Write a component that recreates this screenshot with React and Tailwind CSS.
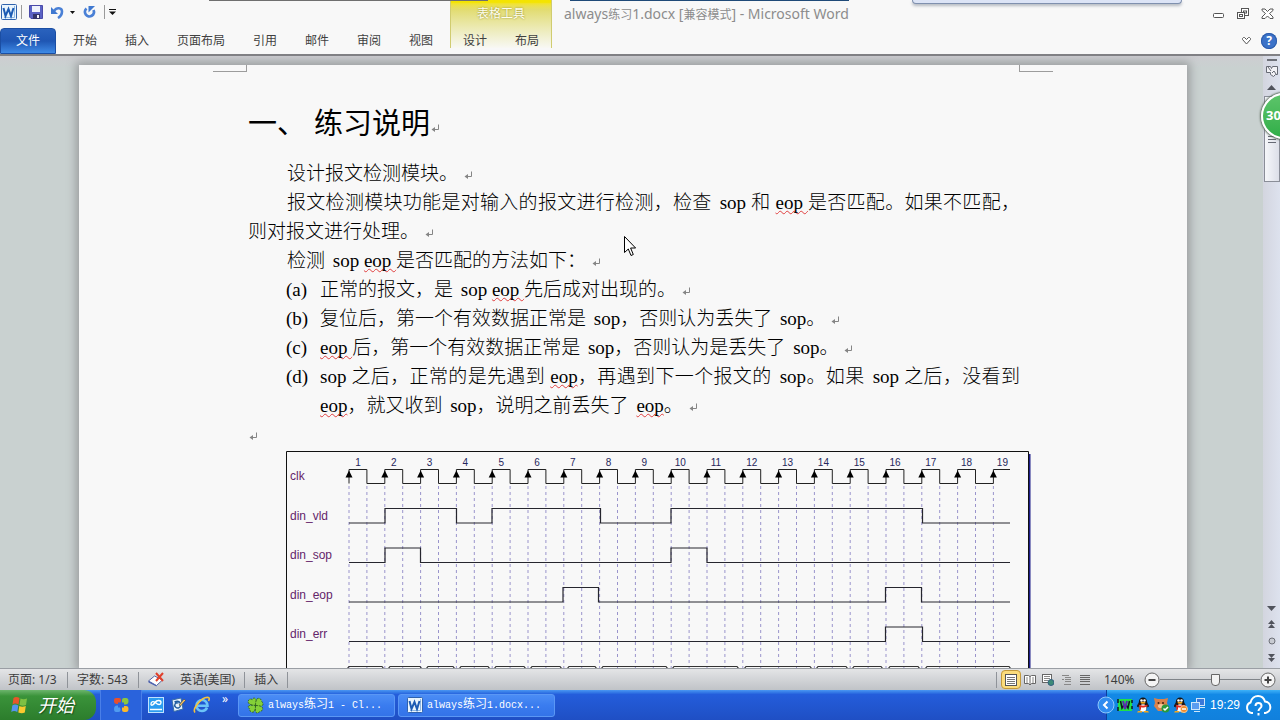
import React from "react";

const UI = "font-['Noto_Sans','Noto_Sans_CJK_SC',sans-serif]";

/* ---------- small drawings ---------- */

function WordIcon() {
  return (
    <svg width="16" height="16" viewBox="0 0 16 16" aria-hidden="true">
      <rect x="0.5" y="0.5" width="15" height="15" rx="1" fill="#eaf5fd" stroke="#2f62ad" />
      <path d="M13.500 2v11.500H3" fill="none" stroke="#8fb8e4" />
      <path d="M2.500 4l2 8L7.500 5l2.500 7L12.500 4" fill="none" stroke="#1d5cb4" strokeWidth="2" />
    </svg>
  );
}

function SaveIcon() {
  return (
    <svg width="14" height="14" viewBox="0 0 14 14" aria-hidden="true">
      <path d="M0.500 0.500h13v13h-11.500l-1.500-1.500z" fill="#5a62c4" stroke="#4a4aa8" />
      <rect x="3" y="1" width="8" height="6" fill="#eef2fb" />
      <rect x="4" y="9" width="7" height="5" fill="#33356b" />
      <rect x="8" y="10" width="2" height="3" fill="#f2f2f8" />
    </svg>
  );
}

function UndoIcon() {
  return (
    <svg width="13" height="13" viewBox="0 0 13 13" aria-hidden="true">
      <path d="M3 5C5.500 1 11 1.500 11 5.500c0 3-1.500 5-4 6.500" fill="none" stroke="#4a80d6" strokeWidth="2.600" />
      <path d="M0 1v7h7z" fill="#3f78d0" />
    </svg>
  );
}

function RedoIcon() {
  return (
    <svg width="13" height="13" viewBox="0 0 13 13" aria-hidden="true">
      <path d="M3.500 2.500A4.500 4.500 0 1 0 10.500 4" fill="none" stroke="#4a80d6" strokeWidth="2.800" />
      <path d="M5.500 0H12L5.500 6.500z" fill="#3f78d0" />
    </svg>
  );
}

function ReturnMark() {
  return (
    <svg className="ml-px inline-block" width="9" height="9" viewBox="0 0 9 9" aria-hidden="true">
      <path d="M7.500 0.500v5H2" fill="none" stroke="#858585" />
      <path d="M4 3v5L0.500 5.500z" fill="#858585" />
    </svg>
  );
}

function MousePointer() {
  return (
    <svg width="12" height="21" viewBox="0 0 12 21" aria-hidden="true">
      <path d="M0.500 0.500v16l3.800-3.500 2.700 6.500 2.300-1-2.700-6.500h5z" fill="#fff" stroke="#000" />
    </svg>
  );
}

/* ---------- title bar and ribbon ---------- */

const TABS = ["开始", "插入", "页面布局", "引用", "邮件", "审阅", "视图"];

function Header() {
  return (
    <header className="relative flex h-14 shrink-0 border-b-2 border-[#808084] bg-[#f8f8f8] text-xs text-[#404040]">
      <div className="flex w-[450px] shrink-0 flex-col">
        <div className="flex h-7 items-center pb-1 pl-px">
          <WordIcon />
          <span className="ml-1 h-3.5 w-px bg-[#9a9a9a]" />
          <button aria-label="保存" className="ml-[7px]"><SaveIcon /></button>
          <button aria-label="撤消" className="ml-2"><UndoIcon /></button>
          <button aria-label="撤消列表" className="ml-1.5">
            <svg width="5" height="3" viewBox="0 0 5 3"><path d="M0 0h5L2.500 3z" fill="#111" /></svg>
          </button>
          <button aria-label="重复" className="ml-2"><RedoIcon /></button>
          <span className="ml-2 h-3.5 w-px bg-[#9a9a9a]" />
          <button aria-label="自定义快速访问工具栏" className="ml-1">
            <svg width="7" height="6" viewBox="0 0 7 6"><path d="M0 0.500h7" stroke="#111" /><path d="M0 2.500h7L3.500 6z" fill="#111" /></svg>
          </button>
        </div>
        <nav className="flex h-[26px] items-stretch">
          <button className="mr-[3px] w-14 rounded-t border border-[#1b4ea3] bg-linear-to-b from-[#2a62bd] via-[#1f56b3] to-[#3f8ae6] text-white">文件</button>
          {TABS.map((t) => (
            <button key={t} className="px-3.5">{t}</button>
          ))}
        </nav>
      </div>
      <div className="flex w-[102px] shrink-0 flex-col">
        <div className="flex h-12 flex-col border-x border-[#d0cc70] bg-linear-to-b from-[#f4e400] from-5% via-[#e2dc70] via-20% to-[#f8f8f4]">
          <div className="h-7 text-center leading-7 text-[#fffef0] [text-shadow:0_0_2px_#8a8420]">表格工具</div>
          <div className="flex h-[26px] shrink-0 justify-between px-3">
            <button className="whitespace-nowrap">设计</button>
            <button className="whitespace-nowrap">布局</button>
          </div>
        </div>
      </div>
      <div className="flex min-w-0 flex-1 flex-col">
        <div className="flex h-7 items-center justify-between pl-3 pr-1.5">
          <h1 className="truncate text-sm text-[#8c8c8c]">
            always<span className="text-xs">练习</span>1.docx [<span className="text-xs">兼容模式</span>] - Microsoft Word
          </h1>
          <div className="flex items-center gap-3">
            <button aria-label="最小化">
              <svg width="12" height="12" viewBox="0 0 12 12"><rect x="0.500" y="5.500" width="10" height="4" rx="1" fill="#fff" stroke="#555" /></svg>
            </button>
            <button aria-label="还原">
              <svg width="12" height="12" viewBox="0 0 12 12" fill="#fff" stroke="#555"><rect x="4.500" y="0.500" width="7" height="7" /><rect x="6.500" y="3" width="3" height="2" /><rect x="0.500" y="4.500" width="7" height="6" /><rect x="2.500" y="6.500" width="3" height="2" /></svg>
            </button>
            <button aria-label="关闭">
              <svg width="13" height="12" viewBox="0 0 13 12"><path d="M1 1h3l2.500 2.500L9 1h3v1.500L8.500 5.500 12 9v1.500H9L6.500 8 4 10.500H1V9l3.500-3.500L1 2.500z" fill="#fff" stroke="#555" /></svg>
            </button>
          </div>
        </div>
        <div className="flex h-[26px] items-center justify-end gap-2.5 pr-[3px]">
          <button aria-label="功能区最小化">
            <svg width="9" height="8" viewBox="0 0 9 8"><path d="M0.500 1.500l1-1h1l2 2 2-2h1l1 1v1L4.500 7 0.500 2.500z" fill="#fff" stroke="#555" /></svg>
          </button>
          <button aria-label="帮助" className="flex size-4 items-center justify-center rounded-full bg-[#3b72c8] font-bold text-white ring-1 ring-inset ring-[#2c5cab]">?</button>
        </div>
      </div>
      <span className="absolute left-[209px] top-0 h-px w-[279px] bg-[#6f6f6f]" />
      <span className="absolute left-[570px] top-0 h-px w-[279px] bg-[#1f4a78]" />
      <span className="absolute left-[912px] top-0 h-1 w-[270px] rounded-b-sm border-x border-b border-[#7f90ae] bg-[#dce4f6] shadow-[0_2px_3px_#b5bac2]" />
    </header>
  );
}

/* ---------- document ---------- */

function Misspelt({ children }) {
  return (
    <span className="underline decoration-[#e04040] decoration-wavy decoration-1 underline-offset-1 [text-decoration-skip-ink:none]">{children}</span>
  );
}

/* Latin word set inside Chinese text, with the extra space that precedes it */
function Latin({ children }) {
  return <span className="ml-[3px]">{children}</span>;
}

function Item({ mark, children }) {
  return (
    <li className="flex pl-[38px]">
      <span className="w-[34px] shrink-0">{mark}</span>
      <p className="flex-1 text-justify">{children}</p>
    </li>
  );
}

const T0 = 349;
const STEP = 35.8;
const clockX = Array.from({ length: 19 }, (_, i) => T0 + STEP * i);

function clockPath() {
  return clockX
    .map((x, i) => {
      const rise = `${i ? "L" : "M"}${x} 483.5V469.5`;
      return i < 18 ? `${rise}H${x + STEP / 2}V483.5` : `${rise}H1010`;
    })
    .join("");
}

const SIGNALS = [
  { name: "din_vld", y: 520, d: "M349 523H385V508.5H456.500V523H492V508.500H600.500V523H671V508.500H922.500V523H1010" },
  { name: "din_sop", y: 559, d: "M349 562.500H385V548H420.500V562.500H671V548H707V562.500H1010" },
  { name: "din_eop", y: 599, d: "M349 602H563V587.500H598.500V602H885.500V587.500H921.500V602H1010" },
  { name: "din_err", y: 638, d: "M349 641.500H885.500V627H922.500V641.500H1010" },
];

const BUS = [
  [349, 383], [390, 421], [428, 454], [461, 489], [496, 525], [532, 561], [569, 596],
  [603, 667], [674, 738], [746, 811], [818, 847], [854, 882], [890, 919], [927, 1010],
];

function TimingDiagram() {
  return (
    <svg className="ml-[38px] mt-0.5 block font-['Liberation_Sans',Arial,sans-serif]" width="745" height="240" viewBox="286 451 745 240" role="img" aria-label="时序图">
      <path d="M1029.500 454V691" stroke="#1c1c88" strokeWidth="2" />
      <path d="M286.500 691V451.500H1028.500V691" fill="#f8f8f8" stroke="#111" />
      <g stroke="#9a94cc" strokeWidth="1" strokeDasharray="3 3">
        {clockX.map((x, i) => (
          <g key={i}>
            <path d={`M${x} 486V671`} />
            {i < 18 && <path d={`M${x + STEP / 2} 486V671`} />}
          </g>
        ))}
      </g>
      <path d={clockPath()} fill="none" stroke="#222" />
      {clockX.map((x, i) => (
        <g key={i}>
          <path d={`M${x} 470.5l3.500 7h-7z`} fill="#000" />
          <text x={x + 9} y="466" fontSize="10" textAnchor="middle" fill="#26265c">{i + 1}</text>
        </g>
      ))}
      <text x="290" y="480" fontSize="12" fill="#64246a">clk</text>
      {SIGNALS.map((s) => (
        <g key={s.name}>
          <text x="290" y={s.y} fontSize="12" fill="#64246a">{s.name}</text>
          <path d={s.d} fill="none" stroke="#26262e" strokeWidth="1.200" />
        </g>
      ))}
      {BUS.map(([a, b]) => (
        <path key={a} d={`M${a - 2} 669L${a} 666.5H${b - 1}L${b + 1} 669`} fill="none" stroke="#333" strokeWidth="1.200" />
      ))}
    </svg>
  );
}

function Page() {
  return (
    <article className="mx-auto h-full w-[1108px] max-w-full bg-[#f8f8f8] shadow-[0_0_9px_3px_#9a9c9e]">
      <div className="flex justify-between px-[134px]">
        <span className="h-[7px] w-[34px] border-b border-r border-[#9c9c9c]" />
        <span className="h-[7px] w-[34px] border-b border-l border-[#9c9c9c]" />
      </div>
      <div className="pl-[169px] pr-[167px] pt-[34px] font-['Liberation_Serif','Noto_Sans_CJK_SC',serif] text-[19px] font-light leading-[29px] text-black">
        <h2 className="mb-[17px] flex items-center text-[29px] font-normal leading-9">
          <span className="mr-2">一、</span>
          <span>练习说明</span>
          <span className="mt-2 flex"><ReturnMark /></span>
        </h2>
        <p className="indent-[39px]">设计报文检测模块。 <ReturnMark /></p>
        <p className="indent-[39px] text-justify">
          报文检测模块功能是对输入的报文进行检测，检查 <Latin>sop</Latin> 和 <Misspelt>eop </Misspelt>是否匹配。如果不匹配，则对报文进行处理。 <ReturnMark />
        </p>
        <p className="indent-[39px]">检测 <Latin>sop</Latin> <Misspelt>eop </Misspelt>是否匹配的方法如下： <ReturnMark /></p>
        <ol>
          <Item mark="(a)">正常的报文，是 <Latin>sop</Latin> <Misspelt>eop </Misspelt>先后成对出现的。 <ReturnMark /></Item>
          <Item mark="(b)">复位后，第一个有效数据正常是 <Latin>sop</Latin>，否则认为丢失了 <Latin>sop</Latin>。 <ReturnMark /></Item>
          <Item mark="(c)"><Misspelt>eop </Misspelt>后，第一个有效数据正常是 <Latin>sop</Latin>，否则认为是丢失了 <Latin>sop</Latin>。 <ReturnMark /></Item>
          <Item mark="(d)">
            sop 之后，正常的是先遇到 <Misspelt>eop</Misspelt>，再遇到下一个报文的 <Latin>sop</Latin>。如果 <Latin>sop</Latin> 之后，没看到 <Misspelt>eop</Misspelt>，就又收到 <Latin>sop</Latin>，说明之前丢失了 <Latin><Misspelt>eop</Misspelt></Latin>。 <ReturnMark />
          </Item>
        </ol>
        <p><ReturnMark /></p>
        <TimingDiagram />
      </div>
    </article>
  );
}

function ScrollBar() {
  return (
    <aside className="flex w-[17px] shrink-0 flex-col items-center bg-linear-to-r from-[#d3d5df] to-[#dde2ee] pt-[3px]">
      <span className="h-0.5 w-2.5 bg-[#6d7078]" />
      <button aria-label="标尺" className="mt-1">
        <svg width="12" height="12" viewBox="0 0 12 12" fill="#f2f2f6" stroke="#666a74"><path d="M0.500 1.500h4l1 2 1-2h5v8h-2l-2 2-3-2v-2h-4z" /><path d="M2 2l3 4M6 8l2-2 2 3" fill="none" /></svg>
      </button>
      <button aria-label="向上滚动" className="mt-2">
        <svg width="9" height="5" viewBox="0 0 9 5"><path d="M0 5h9L4.500 0z" fill="#50535c" /></svg>
      </button>
      <div className="mt-1.5 flex h-[86px] w-4 flex-col items-center justify-center border border-[#8a8e98] bg-linear-to-r from-[#f6f7fa] to-[#dcdfe8]">
        <svg width="8" height="9" viewBox="0 0 8 9"><path d="M0 1.500h8M0 4.500h8M0 7.500h8" stroke="#666a74" /></svg>
      </div>
      <div className="flex flex-1 flex-col items-center justify-end gap-[9px] pb-1.5">
        <button aria-label="向下滚动">
          <svg width="9" height="5" viewBox="0 0 9 5"><path d="M0 0h9L4.500 5z" fill="#50535c" /></svg>
        </button>
        <button aria-label="前一页">
          <svg width="7" height="8" viewBox="0 0 7 8"><path d="M3.500 0L7 4H0zM3.500 4L7 8H0z" fill="#50535c" /></svg>
        </button>
        <button aria-label="选择浏览对象">
          <svg width="8" height="8" viewBox="0 0 8 8"><circle cx="4" cy="4" r="3" fill="#c8cbd2" stroke="#6d7078" /></svg>
        </button>
        <button aria-label="下一页">
          <svg width="7" height="8" viewBox="0 0 7 8"><path d="M3.500 4L7 0H0zM3.500 8L7 4H0z" fill="#50535c" /></svg>
        </button>
      </div>
    </aside>
  );
}

/* ---------- status bar ---------- */

function Sep() {
  return <span className="h-4 w-px bg-[#8f9399]" />;
}

function StatusBar() {
  return (
    <footer className="flex h-[22px] shrink-0 items-center justify-between border-t border-[#9a9ea4] bg-linear-to-b from-[#e4e5e7] to-[#c0c3c7] text-xs text-[#3c3c3c]">
      <div className="flex items-center gap-[9px] pl-2">
        <button className="w-[50px] text-left">页面: 1/3</button>
        <Sep />
        <button className="w-[52px] text-left">字数: 543</button>
        <Sep />
        <button aria-label="校对" className="mr-1.5">
          <svg width="17" height="15" viewBox="0 0 17 15">
            <path d="M0.500 9l6-5 8 4-6 5.500z" fill="#fff" stroke="#5566a8" />
            <path d="M0.500 9l8 4.500v1L0.500 10.500z" fill="#4a5fb0" />
            <path d="M8 1l7 8M15 1L8 9" stroke="#e0402c" strokeWidth="2" />
          </svg>
        </button>
        <button>英语(美国)</button>
        <Sep />
        <button>插入</button>
        <Sep />
      </div>
      <div className="flex items-center pr-1">
        <Sep />
        <button aria-label="页面视图" className="ml-1 flex h-[19px] w-5 items-center justify-center rounded-sm border border-[#c39a3b] bg-[#fbdc7c]">
          <svg width="12" height="12" viewBox="0 0 12 12"><rect x="0.500" y="0.500" width="11" height="11" fill="#fff" stroke="#555" /><path d="M2 3.500h8M2 5.500h8M2 7.500h8M2 9.500h8" stroke="#777" /></svg>
        </button>
        <button aria-label="阅读版式" className="ml-[3px]">
          <svg width="12" height="12" viewBox="0 0 12 12"><path d="M0.500 1.500h4l1.500 1 1.500-1h4v8h-4L6 11 4.500 9.500h-4zM6 2v9" fill="#fff" stroke="#666" /><path d="M2 4h2M2 6h2M2 8h2M8 4h2M8 6h2M8 8h2" stroke="#888" /></svg>
        </button>
        <button aria-label="Web 版式" className="ml-1.5">
          <svg width="12" height="12" viewBox="0 0 12 12"><rect x="0.500" y="0.500" width="9" height="8" fill="#fff" stroke="#666" /><path d="M2 2.500h6M2 4.500h6M2 6.500h4" stroke="#888" /><circle cx="9" cy="8.500" r="3" fill="#3c8a78" stroke="#345f80" /></svg>
        </button>
        <button aria-label="大纲" className="ml-[7px]">
          <svg width="12" height="12" viewBox="0 0 12 12"><path d="M1 1.500h7M4 3.500h6M1 5.500h2M4 5.500h6M4 7.500h6M3 10.500h7" stroke="#888" /></svg>
        </button>
        <button aria-label="草稿" className="ml-1.5">
          <svg width="12" height="12" viewBox="0 0 12 12"><path d="M1 1.500h10M1 3.500h10M1 5.500h10M1 7.500h10M1 10.500h10" stroke="#666" /></svg>
        </button>
        <button className="ml-[13px] w-8 text-left">140%</button>
        <button aria-label="缩小" className="ml-2">
          <svg width="16" height="16" viewBox="0 0 16 16"><circle cx="8" cy="8" r="7" fill="#f4f4f4" stroke="#666" /><path d="M4.500 8h7" stroke="#444" strokeWidth="2" /></svg>
        </button>
        <input
          type="range"
          aria-label="显示比例"
          min="10"
          max="190"
          defaultValue="110"
          className="h-4 w-[100px] appearance-none bg-[linear-gradient(#808489,#808489)] bg-[length:100%_1px] bg-center bg-no-repeat [&::-webkit-slider-thumb]:h-3 [&::-webkit-slider-thumb]:w-[9px] [&::-webkit-slider-thumb]:appearance-none [&::-webkit-slider-thumb]:rounded-b-[4px] [&::-webkit-slider-thumb]:border [&::-webkit-slider-thumb]:border-[#666] [&::-webkit-slider-thumb]:bg-[#f2f2f2]"
        />
        <button aria-label="放大">
          <svg width="16" height="16" viewBox="0 0 16 16"><circle cx="8" cy="8" r="7" fill="#f4f4f4" stroke="#666" /><path d="M4.500 8h7M8 4.500v7" stroke="#444" strokeWidth="2" /></svg>
        </button>
      </div>
    </footer>
  );
}

/* ---------- task bar ---------- */

function Penguin({ badge }) {
  return (
    <svg width="16" height="16" viewBox="0 0 16 16" aria-hidden="true">
      <path d="M2 10c0-3 1.500-3 1.800-5C4 2 5.500 0.500 8 0.500S12 2 12.200 5c.3 2 1.800 2 1.800 5l-1.500-.5c-.5 3-2 5-4.500 5s-4-2-4.500-5z" fill="#151515" />
      <ellipse cx="8" cy="11" rx="3.500" ry="3.700" fill="#fff" />
      <circle cx="6.500" cy="3.500" r="1.300" fill="#fff" />
      <circle cx="9.500" cy="3.500" r="1.300" fill="#fff" />
      <ellipse cx="8" cy="5.800" rx="2.600" ry="1" fill="#f5a81c" />
      <path d="M3.500 7.500c3 1.500 6 1.500 9 0v1.800c-3 1.500-5 1.500-6.500 1v2.500H4.500V9.700z" fill="#e0281e" />
      <path d="M3 14h4v1.500H2zM9 14h4l1 1.500H9z" fill="#f5a81c" />
      {badge && (
        <g>
          <circle cx="12" cy="12" r="3.500" fill="#f08a2a" stroke="#fbe3c0" strokeWidth="0.700" />
          <path d="M10 12h4" stroke="#fff" strokeWidth="1.500" />
        </g>
      )}
    </svg>
  );
}

function Task({ icon, children }) {
  return (
    <button className="flex h-[23px] w-[157px] items-center gap-1 rounded-[3px] border border-[#5a97f5] bg-linear-to-b from-[#4b8df5] via-[#3a7cef] to-[#3373e8] pl-2 font-['Liberation_Mono','Noto_Sans_CJK_SC',monospace] text-[10px] text-white">
      {icon}
      <span className="whitespace-pre">{children}</span>
    </button>
  );
}

function TaskBar() {
  return (
    <div className="flex h-[30px] shrink-0 items-stretch bg-linear-to-b from-[#4a97f2] via-[#245ddb] via-15% to-[#1f4fc4] text-white">
      <button className="flex w-24 items-center gap-2 rounded-r-xl bg-linear-to-b from-[#6cb56c] via-[#3a933a] via-20% to-[#2c7d2c] pl-2.5 text-lg italic [text-shadow:1px_1px_1px_#1c4f1c]">
        <svg width="20" height="18" viewBox="0 0 19 18" aria-hidden="true">
          <path d="M3 2c2-1.500 4-1 6 0L8 8.500c-2-1-4-1.500-6 0z" fill="#e8562a" />
          <path d="M10 2.500c2 1 4 1 6.500 0L15.500 9c-2 1-4 1-6.500 0z" fill="#7fc043" />
          <path d="M1.800 9.500c2-1.500 4-1 6 0l-1 6.500c-2-1-4-1.500-6 0z" fill="#5594ee" />
          <path d="M8.800 10c2 1 4 1 6.500 0l-1 6.500c-2 1-4 1-6.500 0z" fill="#fbc92f" />
        </svg>
        <span>开始</span>
      </button>
      <div className="ml-1 flex items-center">
        <button aria-label="Office" className="flex h-full w-[42px] items-center justify-center border-x border-[#4a7fe8] bg-[#2a63dc]">
          <svg width="16" height="16" viewBox="0 0 16 16">
            <path d="M1 3Q1 1 3 1h3q2 0 2 2v4H4Q1 7 1 4z" fill="#e8502c" />
            <path d="M9 3q0-2 2-2h2q2.500 0 2.500 3T13 7.500H9z" fill="#8cc63f" />
            <path d="M1 12q0-3.500 3-3.500h3.500V13q0 2-2 2H3q-2 0-2-3z" fill="#4f9bf0" />
            <path d="M9 9h4q2.500 0 2.500 3T13 15h-2q-2 0-2-2z" fill="#fbb829" />
            <path d="M5 5.500h2.500V4.500h1.500v1h2v5H9v1H7v-1H5z" fill="#2a63dc" />
          </svg>
        </button>
        <button aria-label="显示桌面" className="ml-1.5">
          <svg width="16" height="16" viewBox="0 0 16 16"><rect x="0.500" y="0.500" width="15" height="15" fill="#2b9cf0" stroke="#bfe2ff" /><path d="M2 12.500h12" stroke="#fff" strokeWidth="1.500" /><path d="M3 7c0-3 3-3 5-1s5 2 5-.5-4-3-6 0-4 3.500-4 1.500" fill="none" stroke="#fff" strokeWidth="1.400" /></svg>
        </button>
        <button aria-label="Outlook Express" className="ml-1.5">
          <svg width="16" height="16" viewBox="0 0 16 16"><path d="M2 3l9-2 2 11-9 2.500z" fill="#e8f2fc" stroke="#3a6ea8" /><path d="M4.500 5c4-2 6 0 6 3s-3 4-5 2 0-5 3-4" fill="none" stroke="#1e5ba0" strokeWidth="1.400" /><path d="M9 8l5-6 1.500 1.500-5 5.500z" fill="#f5c060" stroke="#345" strokeWidth="0.600" /></svg>
        </button>
        <button aria-label="Internet Explorer" className="ml-[7px]">
          <svg width="18" height="18" viewBox="0 0 18 18"><path d="M14 11.500c-1 2.500-3 3.500-5 3.500-3.500 0-5.500-2.500-5.500-5.500S6 4 9 4s5.500 2.300 5.500 5.700H4" fill="none" stroke="#6cc4f8" strokeWidth="2.600" /><path d="M2 16.500C-1 13 9 0 15.500 1.500c1 .3 1 2 0 3.500" fill="none" stroke="#f6c33c" strokeWidth="1.600" /></svg>
        </button>
        <button aria-label="更多快速启动项" className="ml-2 h-full w-3 pb-3 text-xs leading-4">»</button>
      </div>
      <div className="ml-[7px] flex items-center gap-[3px]">
        <Task
          icon={
            <svg width="17" height="17" viewBox="0 0 16 16" aria-hidden="true" stroke="#1f4a18" strokeWidth="0.700" strokeDasharray="2 1" fill="#84d038">
              <path d="M8 8C2 8 0 5 1.500 3S5 2.500 5 2.500 6 0 8 1.500 8 8 8 8z" />
              <path d="M8 8c0-6 2-7.500 4-6.500s2 3 2 3 2 1.500.5 3.500S8 8 8 8z" />
              <path d="M8 8c6 0 7.500 2 6.500 4s-3 2-3 2-1.500 2-3 .5S8 8 8 8z" />
              <path d="M8 8c0 6-2 7-4 6s-1.500-3-1.500-3S0 10 1.500 8.500 8 8 8 8z" />
            </svg>
          }
        >
          always<span className="text-xs">练习</span>1 - Cl...
        </Task>
        <Task icon={<WordIcon />}>
          always<span className="text-xs">练习</span>1.docx...
        </Task>
      </div>
      <div className="ml-auto flex items-center border-l border-[#0d3f9c] bg-linear-to-b from-[#3db2f8] via-[#1289e6] via-15% to-[#1180dc] pr-2">
        <button aria-label="显示隐藏的图标" className="-ml-2.5">
          <svg width="18" height="18" viewBox="0 0 18 18"><circle cx="9" cy="9" r="8" fill="#2f8cf0" stroke="#8cc8fa" /><path d="M10.500 5.500L7 9l3.500 3.500" fill="none" stroke="#fff" strokeWidth="2" /></svg>
        </button>
        <div className="ml-0.5 flex items-center gap-[2px]">
          <svg width="16" height="14" viewBox="0 0 16 14" aria-hidden="true"><rect x="1" y="1" width="14" height="12" fill="#20e048" /><path d="M1 1v4M1 9v4M15 2v3M15 8v3" stroke="#101820" strokeWidth="1.500" /><path d="M3.500 3l1.500 7 2-3M12.500 3L11 10 9 7" fill="none" stroke="#101820" strokeWidth="1.500" /><path d="M6 3l2 8 2-8" fill="none" stroke="#5a2ab0" strokeWidth="2" /></svg>
          <Penguin />
          <svg width="17" height="16" viewBox="0 0 17 16" aria-hidden="true"><path d="M1 1l4 1h6l4-1-1 5 1 3-4 5H5L1 9l1-3z" fill="#d9824a" /><circle cx="5.500" cy="6" r="1" fill="#402010" /><circle cx="10" cy="6" r="1" fill="#402010" /><ellipse cx="8" cy="9" rx="3" ry="2" fill="#f3c79c" /><circle cx="12.500" cy="11.500" r="4" fill="#2a9a3c" /><path d="M10.500 11.500l1.500 1.500 3-3" fill="none" stroke="#fff" strokeWidth="1.500" /></svg>
          <Penguin badge />
          <svg width="16" height="16" viewBox="0 0 16 16" aria-hidden="true" stroke="#cfe6fa"><rect x="6.500" y="1.500" width="8" height="7" fill="#3b78d8" /><rect x="1.500" y="5.500" width="8" height="7" fill="#5b9cf0" /><path d="M4 14.500h6M10 10.500h5" /></svg>
        </div>
        <time className="ml-1 font-['Liberation_Sans',Arial,sans-serif] text-xs">19:29</time>
        <svg className="ml-[5px]" width="27" height="21" viewBox="0 0 27 21" fill="none" stroke="#fff" strokeWidth="2" aria-hidden="true">
          <path d="M8 18H6.500A5.500 5.500 0 0 1 5.500 7.500C6.500 3 10 1 13 1s6 2 7 5.500A5.800 5.800 0 0 1 20.500 18H19" />
          <path d="M10.500 11c0-4 6-4 6 0 0 2.500-3 2-3 5" />
          <path d="M13.500 18v2.500" />
        </svg>
      </div>
    </div>
  );
}

export default function App() {
  return (
    <div className={`relative flex h-screen flex-col overflow-hidden ${UI}`}>
      <Header />
      <main className="flex min-h-0 flex-1 bg-[#c9d1d0]">
        <div className="min-w-0 flex-1 overflow-hidden bg-linear-to-b from-[#cdcdd1] to-[#c9d1d0] to-2% pl-[3px] pt-[9px]">
          <Page />
        </div>
        <ScrollBar />
      </main>
      <StatusBar />
      <TaskBar />
      <div className="absolute left-[624px] top-[236px]"><MousePointer /></div>
      <div className="absolute -right-[27px] top-[93px] flex size-[46px] items-center rounded-full border-2 border-white bg-linear-to-b from-[#5cc46a] to-[#2fae48] pl-[3px] text-[13px] font-bold text-white shadow-[0_0_2px_1px_#5a6a5a]">30</div>
    </div>
  );
}
